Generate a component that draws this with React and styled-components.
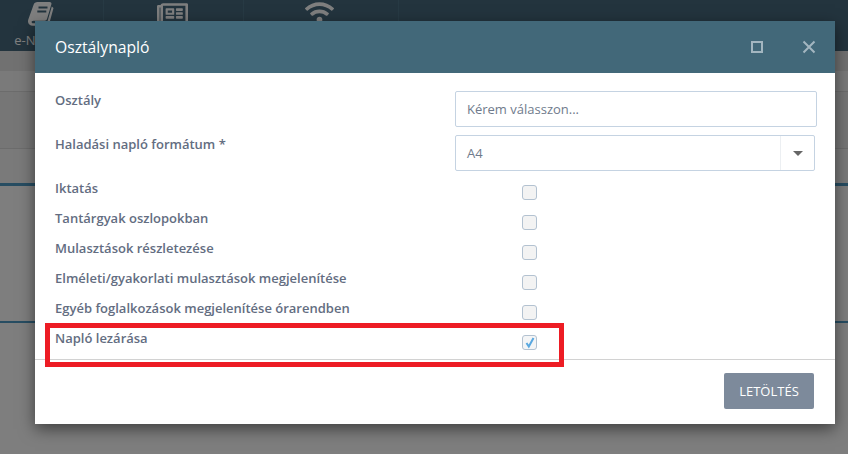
import React from "react";
import styled, { createGlobalStyle } from "styled-components";
import { FaRegNewspaper, FaWifi } from "react-icons/fa";

const Global = createGlobalStyle`
  html, body { margin: 0; padding: 0; height: 100%; overflow: hidden; }
  body { font-family: "Open Sans", "Liberation Sans", sans-serif; background: #fefefe; }
`;

const Page = styled.div`
  position: relative;
  width: 848px;
  height: 454px;
  overflow: hidden;
  background: #fdfdfd;
`;

const Nav = styled.nav`
  display: flex;
  height: 51px;
  background: #46697d;
`;

const NavItem = styled.div`
  width: ${(p) => p.$w}px;
  box-sizing: border-box;
  padding-right: ${(p) => p.$pr || 0}px;
  border-right: 1px solid #4f7488;
  display: flex;
  flex-direction: column;
  align-items: center;
  color: #fff;
  svg { display: block; margin-top: ${(p) => p.$mt || 0}px; }
`;

const NavLabel = styled.span`
  font-size: 13px;
  line-height: 18px;
  margin: 5px 0 0 -6px;
`;

const Band = styled.div`
  height: ${(p) => p.$h}px;
  box-sizing: border-box;
  background: ${(p) => p.$bg || "#fdfdfd"};
  border-bottom: ${(p) => p.$line || "none"};
`;

const Backdrop = styled.div`
  position: absolute;
  inset: 0;
  background: rgba(0, 0, 0, 0.5);
`;

const Modal = styled.section`
  position: absolute;
  left: 35px;
  top: 21px;
  width: 800px;
  height: 403px;
  background: #fff;
  display: flex;
  flex-direction: column;
  box-shadow: 0 5px 15px rgba(0, 0, 0, 0.5);
`;

const Header = styled.header`
  height: 52px;
  flex: none;
  box-sizing: border-box;
  background: #426879;
  display: flex;
  align-items: center;
  padding: 0 19px 0 20px;
  color: #fff;
`;

const Title = styled.h2`
  flex: 1;
  margin: 0;
  font-size: 15.7px;
  font-weight: 400;
  line-height: 20px;
`;

const HeaderIcon = styled.svg`
  display: block;
  width: 14px;
  height: 14px;
  margin-left: ${(p) => p.$ml}px;
  fill: none;
  stroke: #a3b6c0;
  stroke-width: 2;
`;

const Body = styled.div`
  flex: 1;
  padding: 18px 18px 1px 20px;
`;

const FieldRow = styled.div`
  display: flex;
  align-items: flex-start;
  height: 36px;
  margin-bottom: 8px;
`;

const CheckRow = styled.div`
  display: flex;
  align-items: flex-start;
  height: 30px;
`;

const CheckList = styled.div`
  margin-top: -1px;
`;

const Label = styled.label`
  width: 400px;
  flex: none;
  font-size: 13px;
  font-weight: 600;
  line-height: 20px;
  color: #636d81;
  margin-top: ${(p) => p.$mt ?? -1}px;
`;

const TextInput = styled.div`
  width: 362px;
  height: 36px;
  box-sizing: border-box;
  border: 1px solid #c5d3e2;
  border-radius: 2px;
  padding: 0 11px;
  font-size: 13px;
  line-height: 34px;
  color: #6f7b8c;
  background: #fff;
`;

const Select = styled.div`
  width: 360px;
  height: 36px;
  box-sizing: border-box;
  border: 1px solid #c5d3e2;
  border-radius: 2px;
  display: flex;
  font-size: 13px;
  line-height: 34px;
  color: #6f7b8c;
`;

const SelectValue = styled.span`
  flex: 1;
  padding-left: 11px;
`;

const SelectArrow = styled.span`
  width: 33px;
  border-left: 1px solid #eceff2;
  display: flex;
  align-items: center;
  justify-content: center;
  &::after {
    content: "";
    border-left: 5px solid transparent;
    border-right: 5px solid transparent;
    border-top: 5px solid #666;
  }
`;

const CheckBox = styled.span`
  position: relative;
  width: 15px;
  height: 15px;
  box-sizing: border-box;
  margin: 7px 0 0 67px;
  border: 1px solid #b3c2d1;
  border-radius: 3px;
  background: ${(p) => (p.$on ? "#f4f5f6" : "#f3f3f3")};
  svg { position: absolute; left: 0; top: -1px; }
`;

const Footer = styled.footer`
  flex: none;
  height: 65px;
  box-sizing: border-box;
  border-top: 1px solid #d2d2d2;
  padding: 13px 21px 0 0;
  display: flex;
  justify-content: flex-end;
  align-items: flex-start;
`;

const Button = styled.button`
  width: 90px;
  height: 36px;
  border: 0;
  border-radius: 2px;
  background: #7d8a9b;
  color: #fff;
  font-family: inherit;
  font-size: 13px;
  padding: 0;
`;

const Highlight = styled.div`
  position: absolute;
  left: 45px;
  top: 323px;
  width: 519px;
  height: 44px;
  box-sizing: border-box;
  border: 5px solid #ed1c24;
`;

const rows = [
  ["Iktatás"],
  ["Tantárgyak oszlopokban"],
  ["Mulasztások részletezése"],
  ["Elméleti/gyakorlati mulasztások megjelenítése"],
  ["Egyéb foglalkozások megjelenítése órarendben"],
  ["Napló lezárása", true],
];

const BookIcon = () => (
  <svg width="26" height="24" viewBox="0 0 26 24">
    <path
      fill="#fff"
      d="M9.500 0h12c1.600 0 2.300 1 1.900 2.300L19 17c-.4 1.200-1.100 1.700-2.300 1.700H5.500c-1.500 0-2.100.9-1.800 1.700.3.600.9.800 1.700.8h12c1.100 0 1.700-.4 2-1.500L23.800 4.500 25.500 6l-4 14.700c-.5 1.900-1.800 3.100-3.600 3.100H4.800C2.100 23.800 0 22 0 19.500c0-.8.100-1.300.3-1.900L5.600 2.700C6.100 1.100 7.600 0 9.500 0z"
    />
    <path stroke="#46697d" strokeWidth="1.800" d="M10.500 5.500h9M9.300 9.500h9" />
  </svg>
);

export default function App() {
  return (
    <Page>
      <Global />
      <Nav>
        <NavItem $w={104} $pr={21} $mt={2}>
          <BookIcon />
          <NavLabel>e-Napló</NavLabel>
        </NavItem>
        <NavItem $w={140} $pr={2} $mt={-2}>
          <FaRegNewspaper size={31} />
        </NavItem>
        <NavItem $w={155} $pr={4} $mt={-2}>
          <FaWifi size={29} />
        </NavItem>
      </Nav>
      <Band $h={20} $bg="#e2e2e2" />
      <Band $h={21} $bg="#f4f4f4" $line="1px solid #d8d8d8" />
      <Band $h={57} $bg="#ececec" $line="1px solid #d8d8d8" />
      <Band $h={34} $bg="#f4f4f4" />
      <Band $h={3} $bg="#4e9ac4" />
      <Band $h={135} $bg="#fdfdfd" />
      <Band $h={2} $bg="#4e9ac4" />
      <Backdrop />
      <Modal>
        <Header>
          <Title>Osztálynapló</Title>
          <HeaderIcon viewBox="0 0 14 14" $ml={0}>
            <rect x="2" y="2" width="10" height="10" />
          </HeaderIcon>
          <HeaderIcon viewBox="0 0 14 14" $ml={38}>
            <path d="M1.500 1.500l11 11M12.500 1.500l-11 11" />
          </HeaderIcon>
        </Header>
        <Body>
          <FieldRow>
            <Label>Osztály</Label>
            <TextInput>Kérem válasszon...</TextInput>
          </FieldRow>
          <FieldRow>
            <Label>Haladási napló formátum *</Label>
            <Select>
              <SelectValue>A4</SelectValue>
              <SelectArrow />
            </Select>
          </FieldRow>
          <CheckList>
            {rows.map(([text, on]) => (
              <CheckRow key={text}>
                <Label $mt={0}>{text}</Label>
                <CheckBox $on={on}>
                  {on && (
                    <svg width="14" height="14" viewBox="0 0 14 14">
                      <path d="M3.500 8l2.300 3.500L10.500 3" fill="none" stroke="#5aa8e0" strokeWidth="2" />
                    </svg>
                  )}
                </CheckBox>
              </CheckRow>
            ))}
          </CheckList>
        </Body>
        <Footer>
          <Button>LETÖLTÉS</Button>
        </Footer>
      </Modal>
      <Highlight />
    </Page>
  );
}
